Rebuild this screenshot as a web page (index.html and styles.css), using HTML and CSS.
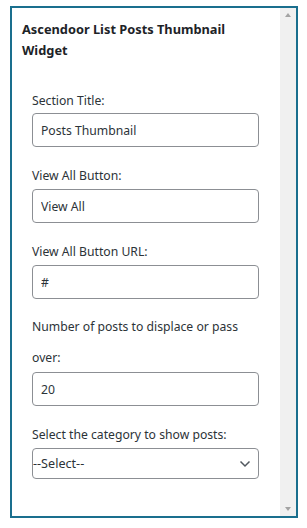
FILE: index.html
```html
<!DOCTYPE html>
<html lang="en">
<head>
<meta charset="UTF-8" />
<meta name="viewport" content="width=device-width, initial-scale=1" />
<title>Ascendoor List Posts Thumbnail Widget</title>
<link rel="stylesheet" href="styles.css">
</head>
<body>
  <div class="widget">
    <div class="widget-body">
      <h3 class="widget-title">Ascendoor List Posts Thumbnail Widget</h3>

      <div class="fields">
        <label for="title" class="field-label first">Section Title:</label>
        <input type="text" id="title" class="field-input" value="Posts Thumbnail" />

        <label for="viewAll" class="field-label">View All Button:</label>
        <input type="text" id="viewAll" class="field-input" value="View All" />

        <label for="viewAllUrl" class="field-label">View All Button URL:</label>
        <input type="text" id="viewAllUrl" class="field-input" value="#" />

        <label for="offset" class="field-label tall">Number of posts to displace or pass over:</label>
        <input type="number" id="offset" class="field-input" value="20" />

        <label for="category" class="field-label">Select the category to show posts:</label>
        <div class="select-wrap">
          <select id="category" class="field-select">
            <option>--Select--</option>
          </select>
          <svg class="select-arrow" width="12" height="8" viewBox="0 0 12 8">
            <path d="M1.5 1.5 L6 6 L10.5 1.5" fill="none" stroke="#50575e" stroke-width="1.5" />
          </svg>
        </div>
      </div>
    </div>

    <!-- fausse barre de défilement -->
    <div class="scrollbar">
      <span class="arrow up"></span>
      <span class="arrow down"></span>
    </div>
  </div>
</body>
</html>
```

FILE: styles.css
```css
body { margin: 0; background: #fff; font-family: "Noto Sans", "Open Sans", sans-serif; color: #1d2327; }
.widget { display: flex; box-sizing: border-box; width: 288px; height: 512px; margin: 6px 0 0 10px; border: 2px solid #1a6f8e; background: #fff; }
.widget-body { flex: 1; padding: 11px 0 0 10px; }
.widget-title { margin: 0; width: 235px; font-size: 12.8px; font-weight: bold; line-height: 21px; color: #1d2327; }
.fields { width: 227px; padding-left: 10px; margin-top: 30px; }
.field-label { display: block; font-size: 12.2px; line-height: 20px; margin: 19px 0 3px; color: #2c3338; }
.field-label.first { margin-top: 0; margin-bottom: 2px; }
.field-label.tall { line-height: 31px; margin: 12px 0 -1px; }
.field-input { display: block; box-sizing: border-box; width: 100%; height: 34px; margin: 0; padding: 0 8px; font: 12.2px "Noto Sans", "Open Sans", sans-serif; color: #2c3338; border: 1px solid #8c8f94; border-radius: 4px; background: #fff; }
.field-input[type=number] { -moz-appearance: textfield; }
.field-input::-webkit-inner-spin-button { -webkit-appearance: none; }
.select-wrap { position: relative; }
.field-select { display: block; box-sizing: border-box; width: 100%; height: 31px; margin: 0; padding: 0 24px 0 0; font: 12.6px "Noto Sans", "Open Sans", sans-serif; color: #2c3338; border: 1px solid #8c8f94; border-radius: 4px; background: #fff; appearance: none; -webkit-appearance: none; }
.select-arrow { position: absolute; right: 8px; top: 12px; pointer-events: none; }
.scrollbar { position: relative; width: 16px; background: #f0f0f0; }
.arrow { position: absolute; left: 5px; width: 0; height: 0; border-left: 3.5px solid transparent; border-right: 3.5px solid transparent; }
.arrow.up { top: 5px; border-bottom: 4px solid #a3a3a3; }
.arrow.down { bottom: 5px; border-top: 4px solid #a3a3a3; }
```
